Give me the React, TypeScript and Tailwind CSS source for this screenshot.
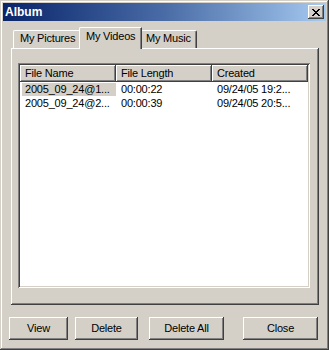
import React from 'react';

const raised =
  'shadow-[inset_-1px_-1px_#404040,inset_1px_1px_#ffffff,inset_-2px_-2px_#808080,inset_2px_2px_#d4d0c8]';

const rows = [
  { name: '2005_09_24@1...', length: '00:00:22', created: '09/24/05 19:2...', selected: true },
  { name: '2005_09_24@2...', length: '00:00:39', created: '09/24/05 20:5...', selected: false },
];

function HeaderCell({ label, width }: { label: string; width: string }) {
  return (
    <div className={`${width} h-[17px] bg-[#d4d0c8] ${raised} flex items-center px-[5px] shrink-0`}>
      {label}
    </div>
  );
}

function Button({ label, width }: { label: string; width: string }) {
  return (
    <div className={`${width} h-[23px] bg-[#d4d0c8] ${raised} flex items-center justify-center`}>
      {label}
    </div>
  );
}

export default function App() {
  return (
    <div
      className="w-[329px] h-[350px] bg-[#d4d0c8] p-[3px] text-[11px] leading-[13px] tracking-[-0.2px] text-black shadow-[inset_-1px_-1px_#404040,inset_1px_1px_#d4d0c8,inset_-2px_-2px_#808080,inset_2px_2px_#ffffff] flex flex-col"
      style={{ fontFamily: '"Liberation Sans", Arial, sans-serif' }}
    >
      {/* title bar */}
      <div className="h-[18px] bg-gradient-to-r from-[#0a246a] via-[#4a6ca6] to-[#a6caf0] flex items-center justify-between pl-[2px] pr-[2px]">
        <span className="text-white font-bold text-[12px] tracking-normal">Album</span>
        <div className={`w-[16px] h-[14px] bg-[#d4d0c8] ${raised} flex items-center justify-center`}>
          <svg width="8" height="7" viewBox="0 0 8 7">
            <path d="M0 0h2v1h1v1h2v-1h1v-1h2v1h-1v1h-1v1h-1v1h1v1h1v1h1v1h-2v-1h-1v-1h-2v1h-1v1h-2v-1h1v-1h1v-1h1v-1h-1v-1h-1v-1h-1z" fill="#000" />
          </svg>
        </div>
      </div>

      {/* tabs */}
      <div className="mt-[6px] ml-[8px] flex flex-col">
        <div className="flex items-end h-[21px] pl-[2px] relative z-10">
          <div className="w-[66px] h-[18px] bg-[#d4d0c8] border-t border-l border-white rounded-tl-[2px] flex items-start pt-[1px] pl-[6px]">
            My Pictures
          </div>
          <div className="w-[63px] h-[22px] -mb-[1px] bg-[#d4d0c8] border-t border-l border-white rounded-tl-[2px] border-r border-r-[#404040] shadow-[inset_-1px_0_#808080] flex items-start pt-[2px] pl-[6px]">
            My Videos
          </div>
          <div className="w-[55px] h-[18px] bg-[#d4d0c8] border-t border-white rounded-tr-[2px] border-r border-r-[#404040] shadow-[inset_-1px_0_#808080] flex items-start pt-[1px] pl-[4px]">
            My Music
          </div>
        </div>
        <div className="w-[308px] h-[257px] bg-[#d4d0c8] shadow-[inset_-1px_-1px_#404040,inset_1px_1px_#ffffff,inset_-2px_-2px_#808080] pt-[15px] pl-[7px]">
          {/* list view */}
          <div className="w-[292px] h-[225px] bg-white shadow-[inset_1px_1px_#808080,inset_-1px_-1px_#ffffff,inset_2px_2px_#404040,inset_-2px_-2px_#d4d0c8] p-[2px] flex flex-col">
            <div className="flex">
              <HeaderCell label="File Name" width="w-[96px]" />
              <HeaderCell label="File Length" width="w-[96px]" />
              <HeaderCell label="Created" width="w-[96px]" />
            </div>
            {rows.map((r) => (
              <div key={r.name} className="flex h-[14px] items-center">
                <div className="w-[96px] pl-[2px] shrink-0">
                  <span className={`pl-[3px] pr-[2px] inline-block w-[94px] ${r.selected ? 'bg-[#d4d0c8]' : ''}`}>
                    {r.name}
                  </span>
                </div>
                <div className="w-[96px] pl-[5px] shrink-0">{r.length}</div>
                <div className="w-[96px] pl-[5px] shrink-0">{r.created}</div>
              </div>
            ))}
          </div>
        </div>
      </div>

      {/* buttons */}
      <div className="flex mt-[12px] pl-[6px]">
        <Button label="View" width="w-[59px]" />
        <div className="w-[7px]" />
        <Button label="Delete" width="w-[63px]" />
        <div className="w-[11px]" />
        <Button label="Delete All" width="w-[75px]" />
        <div className="w-[19px]" />
        <Button label="Close" width="w-[75px]" />
      </div>
    </div>
  );
}
